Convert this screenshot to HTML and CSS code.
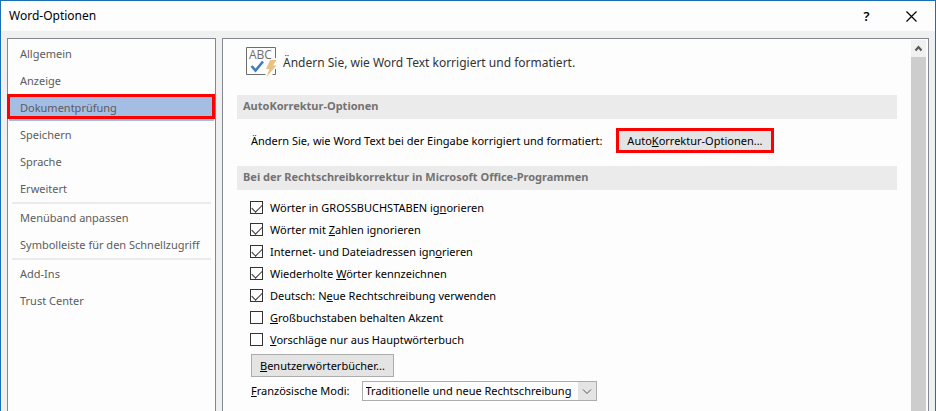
FILE: index.html
```html
<!DOCTYPE html>
<html lang="de">

<head>
    <meta charset="UTF-8">
    <title>Word-Optionen</title>
    <link rel="stylesheet" href="styles.css">
</head>

<body>
    <div class="dialog">
        <header class="titlebar">
            <h1>Word-Optionen</h1>
            <button type="button" class="win_btn help">?</button>
            <button type="button" class="win_btn" aria-label="Schließen">
                <svg width="11" height="11" viewBox="0 0 11 11"><path d="M.5 .5l10 10M10.5 .5l-10 10" stroke="#000" stroke-width="1.2"/></svg>
            </button>
        </header>
        <div class="content">
            <nav class="sidebar">
                <ul>
                    <li><a href="#">Allgemein</a></li>
                    <li><a href="#">Anzeige</a></li>
                    <li><a href="#" class="active marked">Dokumentprüfung</a></li>
                    <li><a href="#">Speichern</a></li>
                    <li><a href="#">Sprache</a></li>
                    <li><a href="#">Erweitert</a></li>
                </ul>
                <ul>
                    <li><a href="#">Menüband anpassen</a></li>
                    <li><a href="#">Symbolleiste für den Schnellzugriff</a></li>
                </ul>
                <ul>
                    <li><a href="#">Add-Ins</a></li>
                    <li><a href="#">Trust Center</a></li>
                </ul>
            </nav>
            <main class="panel">
                <div class="page">
                    <div class="intro">
                        <svg width="32" height="32" viewBox="0 0 32 32">
                            <path d="M29.500 11V.5H.5v27h19M29.500 22v5.500h-3" fill="none" stroke="#6d6d6d"/>
                            <text x="3" y="12" class="abc">ABC</text>
                            <path d="M5.500 19l4 4.500 7.500-9" fill="none" stroke="#3f7cbf" stroke-width="2.600"/>
                            <path d="M24 13h6.500l-3.500 5.500h3.500L20.500 30l3-8H20z" fill="#eac282"/>
                        </svg>
                        <p>Ändern Sie, wie Word Text korrigiert und formatiert.</p>
                    </div>

                    <h2>AutoKorrektur-Optionen</h2>
                    <div class="row auto">
                        <span>Ändern Sie, wie Word Text bei der Eingabe korrigiert und formatiert:</span>
                        <button type="button" class="btn btn_marked">Auto<u>K</u>orrektur-Optionen...</button>
                    </div>

                    <h2>Bei der Rechtschreibkorrektur in Microsoft Office-Programmen</h2>
                    <div class="checks">
                        <label><input type="checkbox" checked><span>Wörter in GROSSBUCHSTABEN ig<u>n</u>orieren</span></label>
                        <label><input type="checkbox" checked><span>Wörter mit <u>Z</u>ahlen ignorieren</span></label>
                        <label><input type="checkbox" checked><span>Internet- und Dateiadressen ign<u>o</u>rieren</span></label>
                        <label><input type="checkbox" checked><span>Wiederholte <u>W</u>örter kennzeichnen</span></label>
                        <label><input type="checkbox" checked><span>Deutsch: N<u>e</u>ue Rechtschreibung verwenden</span></label>
                        <label><input type="checkbox"><span><u>G</u>roßbuchstaben behalten Akzent</span></label>
                        <label><input type="checkbox"><span><u>V</u>orschläge nur aus Hauptwörterbuch</span></label>
                    </div>
                    <button type="button" class="btn dict"><u>B</u>enutzerwörterbücher...</button>
                    <div class="row modes">
                        <label for="modi"><u>F</u>ranzösische Modi:</label>
                        <div class="select">
                            <select id="modi">
                                <option>Traditionelle und neue Rechtschreibung</option>
                            </select>
                            <svg width="18" height="18" viewBox="0 0 18 18"><path d="M5 7.500l4 4 4-4" fill="none" stroke="#555"/></svg>
                        </div>
                    </div>
                </div>
                <div class="scrollbar">
                    <button type="button" aria-label="Nach oben">
                        <svg width="15" height="17" viewBox="0 0 15 17"><path d="M4.500 10.500l3-3.500 3 3.500" fill="none" stroke="#555" stroke-width="2"/></svg>
                    </button>
                    <div class="thumb"></div>
                </div>
            </main>
        </div>
    </div>
</body>

</html>
```
FILE: styles.css
```css
* {
    padding: 0;
    margin: 0;
    box-sizing: border-box;
    list-style: none;
}

body {
    font-family: "Noto Sans", "Open Sans", sans-serif;
    font-size: 11px;
    line-height: 16px;
    color: #000;
    overflow: hidden;
}

button,
select {
    font: inherit;
    color: inherit;
}

svg {
    display: block;
    flex: none;
}

.dialog {
    height: 100vh;
    display: flex;
    flex-direction: column;
    border: 1px solid #1a6fb5;
    border-bottom: none;
    background-color: #f0f0f0;
}

.titlebar {
    height: 30px;
    padding: 0 1px 0 8px;
    display: flex;
    align-items: center;
    background-color: #fdfdfd;
}

.titlebar h1 {
    flex: 1;
    font-size: 12px;
    font-weight: normal;
}

.win_btn {
    width: 45px;
    height: 30px;
    display: flex;
    align-items: center;
    justify-content: center;
    border: none;
    background: none;
}

.help {
    font-size: 13px;
    font-weight: 600;
}

.content {
    flex: 1;
    min-height: 0;
    display: flex;
    gap: 6px;
    padding: 7px 6px 0;
}

.sidebar,
.panel {
    border: 1px solid #828790;
    border-bottom: none;
    background-color: #fdfdfd;
}

.sidebar {
    width: 209px;
    flex: none;
    padding: 1px;
}

.sidebar ul + ul::before {
    content: "";
    display: block;
    height: 2px;
    margin: 0 3px;
    background-color: #ebebeb;
}

.sidebar a {
    display: block;
    height: 27px;
    line-height: 27px;
    padding-left: 11px;
    white-space: nowrap;
    text-decoration: none;
    color: #5c5c5c;
}

.sidebar .active {
    background-color: #a3bde3;
}

.marked {
    position: relative;
}

/* red frame around the current entry */
.marked::after {
    content: "";
    position: absolute;
    top: 0;
    right: -1px;
    bottom: 2px;
    left: -2px;
    border: 3px solid #f00;
}

.panel {
    flex: 1;
    min-width: 0;
    display: flex;
    padding: 1px 2px 0 14px;
}

.page {
    flex: 1;
    min-width: 0;
    padding-right: 14px;
}

.intro {
    display: flex;
    align-items: center;
    gap: 5px;
    padding: 7px 0 16px 9px;
    color: #333;
}

.intro p {
    font-size: 12px;
}

.abc {
    font-family: "Open Sans", sans-serif;
    font-size: 12px;
    fill: #6d6d6d;
}

h2 {
    height: 24px;
    line-height: 22px;
    padding-left: 6px;
    font-size: 11px;
    font-weight: bold;
    color: #737373;
    background-color: #ebebeb;
}

.row {
    display: flex;
    align-items: center;
    padding-left: 14px;
}

.auto {
    gap: 14px;
    padding-top: 9px;
    padding-bottom: 13px;
}

.btn {
    height: 23px;
    padding: 0 8px;
    border: 1px solid #acacac;
    background-color: #e4e4e4;
    white-space: nowrap;
}

.btn_marked {
    height: 25px;
    border: 3px solid #f00;
}

.checks {
    padding: 7px 0 0 13px;
}

.checks label {
    display: flex;
    align-items: center;
    gap: 7px;
    height: 22px;
}

.checks input {
    appearance: none;
    width: 13px;
    height: 13px;
    margin-bottom: 2px;
    flex: none;
    border: 1px solid #333;
    background-color: #fdfdfd;
}

/* tick */
.checks input:checked::before {
    content: "";
    display: block;
    width: 9px;
    height: 5px;
    margin: 2px 0 0 1px;
    border: solid #333;
    border-width: 0 0 1px 1px;
    transform: rotate(-45deg);
}

.dict {
    display: block;
    margin: 3px 0 4px 14px;
}

.modes {
    gap: 12px;
}

.select {
    position: relative;
}

.select select {
    appearance: none;
    height: 20px;
    padding: 0 24px 0 3px;
    border: 1px solid #acacac;
    border-radius: 0;
    background-color: #fdfdfd;
}

.select svg {
    position: absolute;
    top: 1px;
    right: 1px;
    background-color: #e4e4e4;
    pointer-events: none;
}

.scrollbar {
    width: 15px;
    flex: none;
    display: flex;
    flex-direction: column;
}

.scrollbar button {
    height: 17px;
    border: none;
    background-color: #f0f0f0;
}

.thumb {
    flex: 1;
    background-color: #cdcdcd;
}
```
